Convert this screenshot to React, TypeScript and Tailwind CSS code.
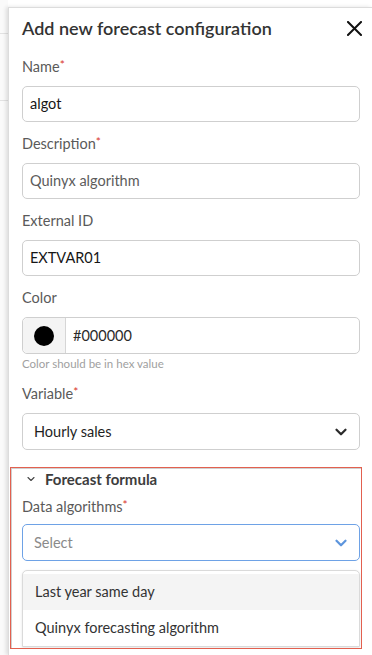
import { ChevronDown } from 'lucide-react';

// Champ de formulaire : label + contrôle
function Label({ text, required }: { text: string; required?: boolean }) {
  return (
    <div className="h-[20px] leading-[20px] text-[14.5px] text-[#5a5a5a] mb-[9px]">
      {text}
      {required && <span className="text-[#d9362b] text-[12px] align-top leading-[16px]">*</span>}
    </div>
  );
}

function TextInput({ value, muted }: { value: string; muted?: boolean }) {
  return (
    <div
      className={`h-[36px] rounded-[5px] border border-[#cfcfcf] bg-white px-[7px] flex items-center text-[14.5px] ${
        muted ? 'text-[#5c5c5c]' : 'text-[#161616]'
      }`}
    >
      {value}
    </div>
  );
}

export default function App() {
  return (
    <div className="relative w-[372px] h-[655px] overflow-hidden bg-white flex font-['Lato',sans-serif]">
      {/* fond de page à gauche */}
      <div className="w-[8px] shrink-0 bg-[#fafafa] flex flex-col">
        <div className="h-[34px] border-b border-[#e2e2e2]" />
        <div className="h-[67px] border-b border-[#e2e2e2]" />
      </div>

      {/* panneau latéral */}
      <div className="flex-1 mt-[7px] border-t border-l border-[#dcdcdc] shadow-[-2px_0_4px_rgba(0,0,0,0.12)] pl-[13px] pr-[12px] pt-[7px]">
        <div className="flex items-center justify-between h-[26px] mb-[16px]">
          <h1 className="text-[18px] font-semibold text-[#333333]">
            Add new forecast configuration
          </h1>
          <svg width="15" height="15" viewBox="0 0 15 15" className="mr-[-2px]">
            <path d="M1 1L14 14M14 1L1 14" stroke="#111" strokeWidth="2" strokeLinecap="square" />
          </svg>
        </div>

        <div className="mb-[12px]">
          <Label text="Name" required />
          <TextInput value="algot" />
        </div>

        <div className="mb-[12px]">
          <Label text="Description" required />
          <TextInput value="Quinyx algorithm" muted />
        </div>

        <div className="mb-[12px]">
          <Label text="External ID" />
          <TextInput value="EXTVAR01" />
        </div>

        <div className="mb-[12px]">
          <Label text="Color" />
          <div className="h-[37px] rounded-[5px] border border-[#cfcfcf] bg-white flex items-stretch">
            <div className="w-[43px] bg-[#f4f4f4] border-r border-[#d6d6d6] rounded-l-[5px] flex items-center justify-center">
              <div className="w-[20px] h-[20px] rounded-full bg-black" />
            </div>
            <div className="flex items-center pl-[7px] text-[14.5px] text-[#2a2a2a]">#000000</div>
          </div>
          <div className="mt-[2px] h-[16px] leading-[16px] text-[11.5px] text-[#a0a0a0]">
            Color should be in hex value
          </div>
        </div>

        <div className="mb-[17px]">
          <Label text="Variable" required />
          <div className="h-[37px] rounded-[5px] border border-[#cfcfcf] bg-white px-[11px] flex items-center justify-between text-[14.5px] text-[#1e1e1e]">
            <span>Hourly sales</span>
            <ChevronDown size={18} strokeWidth={3} className="text-[#2b2b2b] mr-[-2px]" />
          </div>
        </div>

        {/* Section formule (encadré d'annotation) */}
        <div className="ml-[-12px] mr-[-2px] h-[182px] border border-[#e2604f] overflow-hidden">
          <div className="h-full border-t border-l border-[#d0d0d0] pl-[10px] pr-[1px]">
            <div className="h-[20px] flex items-center text-[15px] font-bold text-[#3d3d3d]">
              <ChevronDown size={12} strokeWidth={2.2} className="text-[#444] ml-[3px] mr-[8px]" />
              Forecast formula
            </div>
            <div className="mt-[8px]">
              <Label text="Data algorithms" required />
            </div>
            <div className="mt-[-2px] h-[37px] rounded-[5px] border border-[#6ea2e6] bg-white px-[11px] flex items-center justify-between text-[14.5px] text-[#8a8a8a]">
              <span>Select</span>
              <ChevronDown size={18} strokeWidth={3} className="text-[#5d95dd] mr-[-2px]" />
            </div>
            <div className="mt-[9px] rounded-t-[5px] border border-[#dadada] bg-white shadow-[0_1px_3px_rgba(0,0,0,0.1)] pt-[3px]">
              <div className="h-[36px] bg-[#f4f4f4] flex items-center px-[12px] text-[14.5px] text-[#333]">
                Last year same day
              </div>
              <div className="h-[36px] flex items-center px-[12px] text-[14.5px] text-[#333]">
                Quinyx forecasting algorithm
              </div>
            </div>
          </div>
        </div>
      </div>
    </div>
  );
}
